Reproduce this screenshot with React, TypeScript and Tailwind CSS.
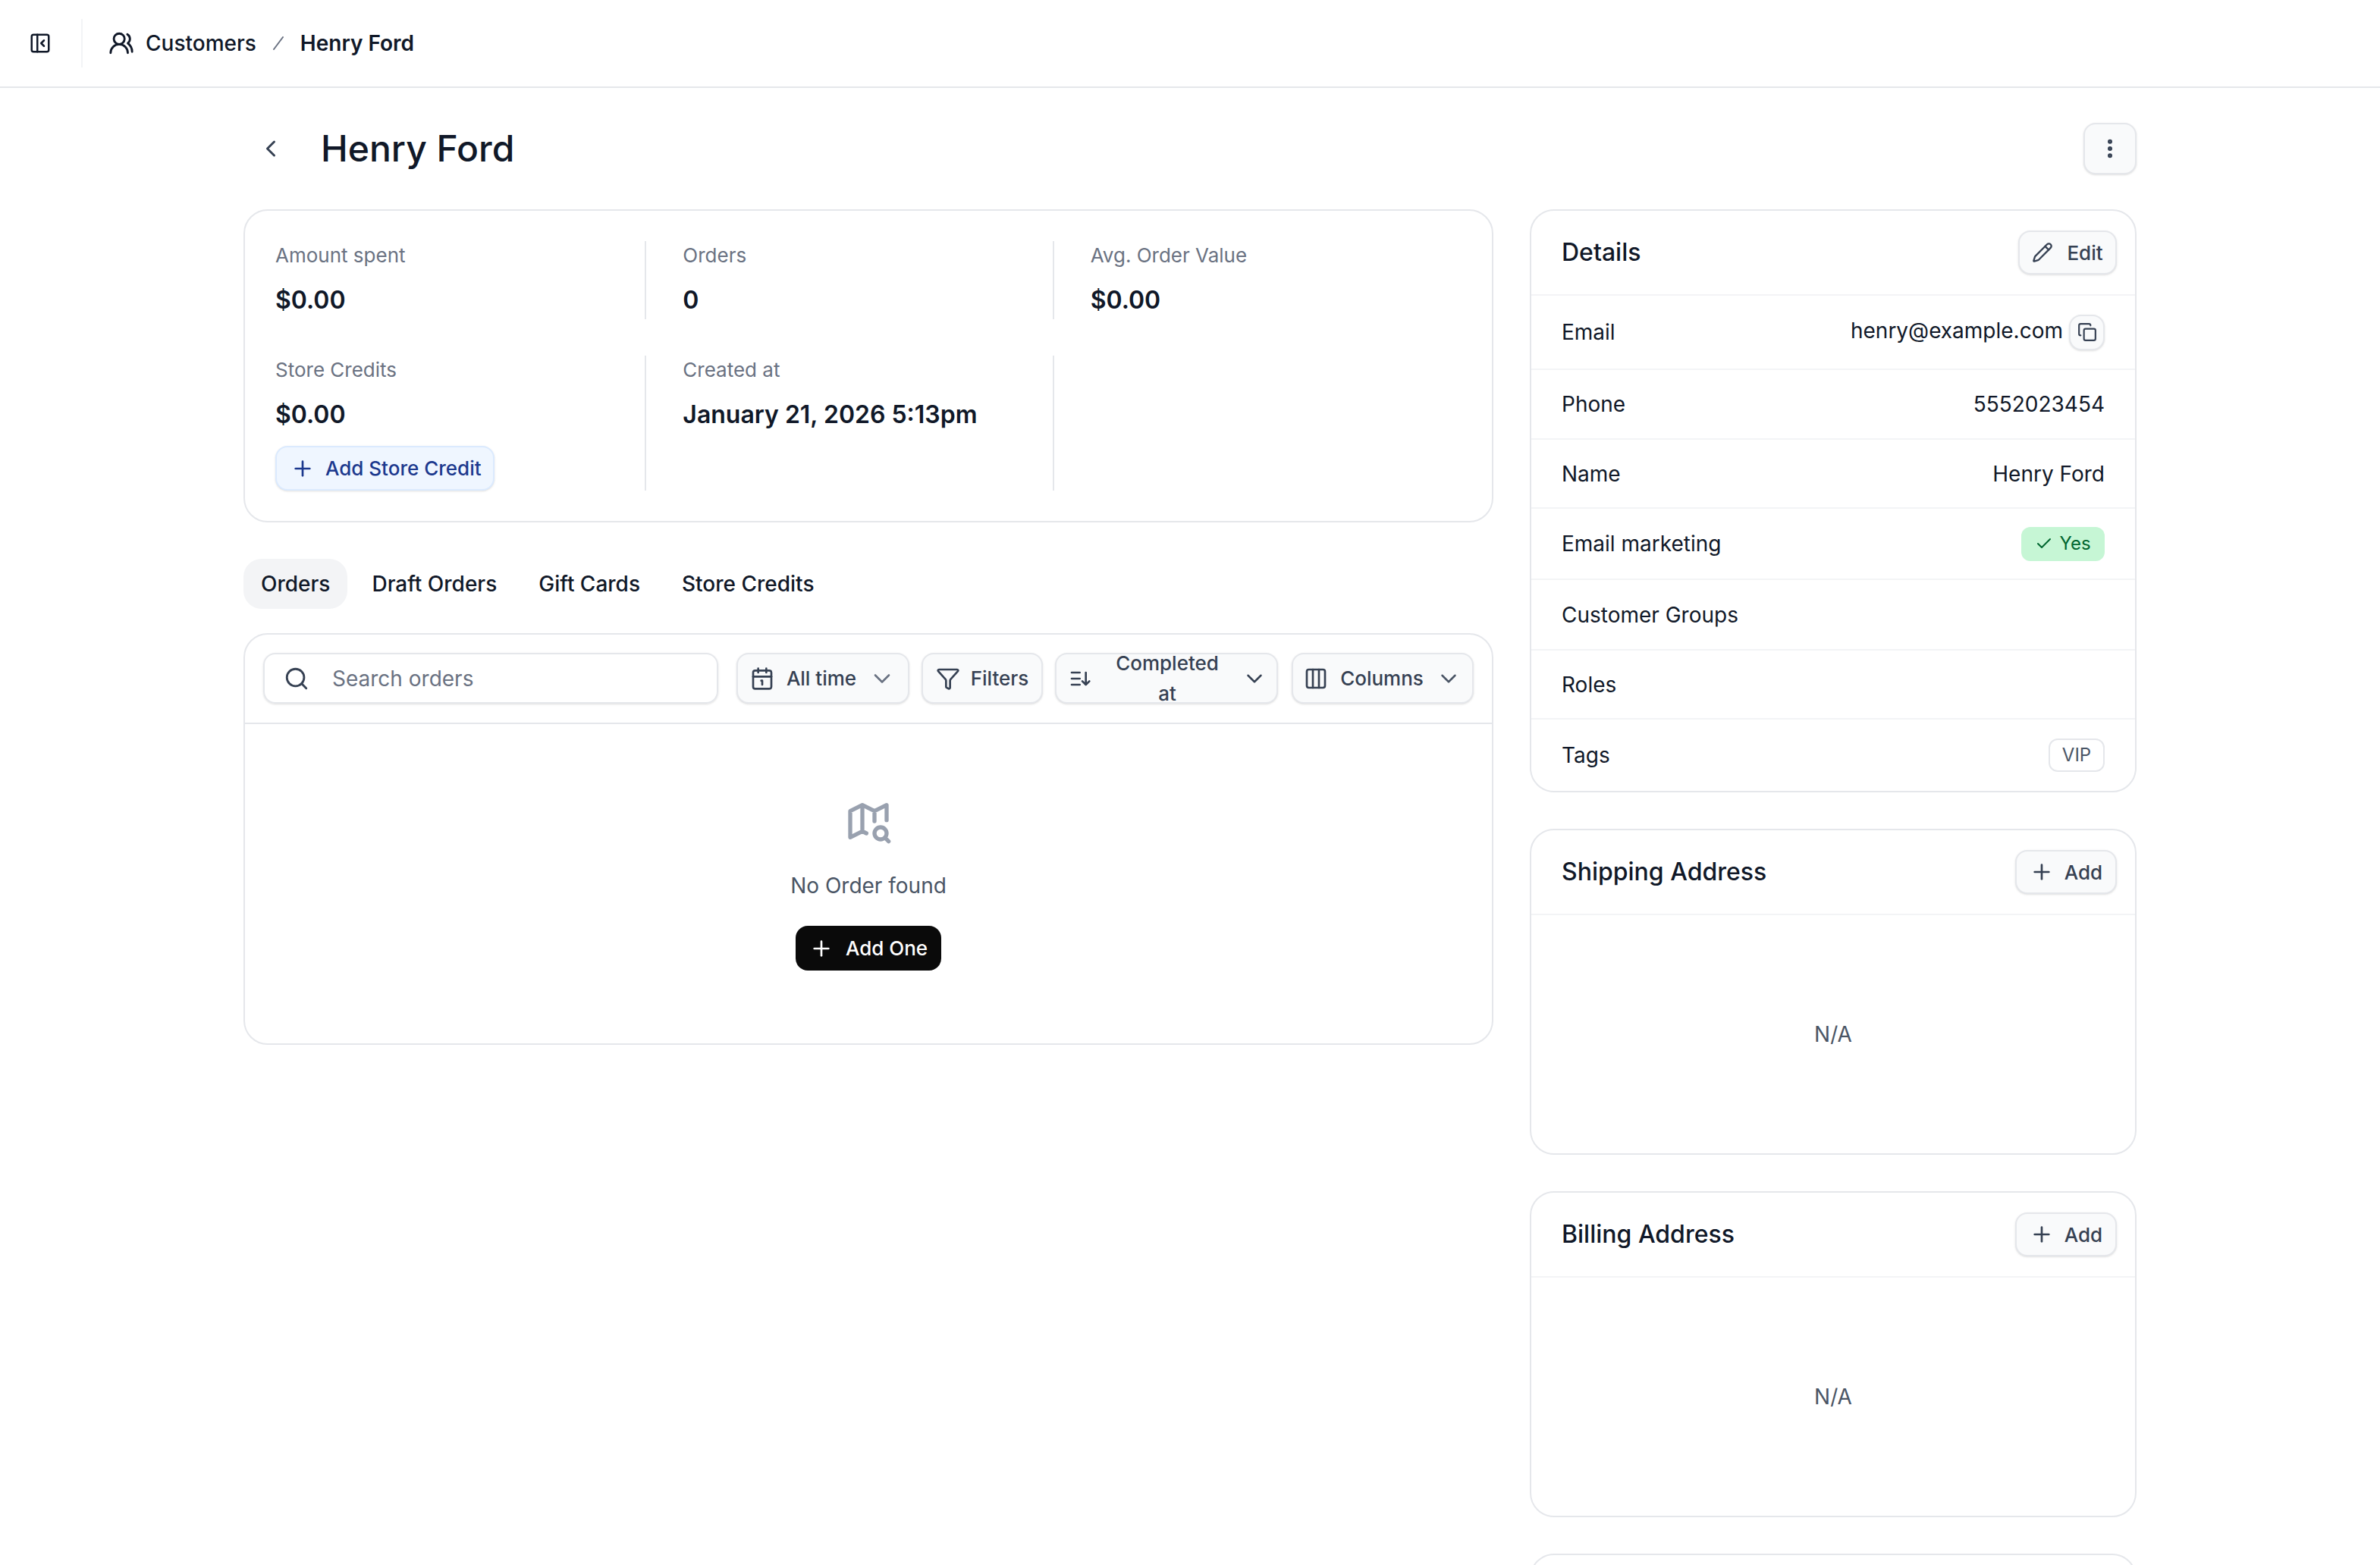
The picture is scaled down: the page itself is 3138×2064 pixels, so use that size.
import { ReactNode } from 'react';
import {
  Calendar1,
  Check,
  ChevronDown,
  ChevronLeft,
  Columns3,
  Copy,
  EllipsisVertical,
  Funnel,
  PanelLeftClose,
  Pencil,
  Plus,
  Search,
  UsersRound,
} from 'lucide-react';

// Small outlined button used in the toolbar and card headers
function ToolButton({ children, className = '' }: { children: ReactNode; className?: string }) {
  return (
    <button className={`flex items-center justify-center rounded-[16px] border-2 border-gray-200 bg-gray-50 text-[26px] font-medium text-gray-700 shadow-sm ${className}`}>
      {children}
    </button>
  );
}

function Stat({ label, value, divider = true, children }: { label: string; value?: string; divider?: boolean; children?: ReactNode }) {
  return (
    <div className={divider ? 'border-r-2 border-gray-200' : ''}>
      <div className="text-[26px] leading-[38px] text-gray-500">{label}</div>
      {value && <div className="mt-4 pb-px text-[32px] font-semibold leading-[48px] text-gray-900">{value}</div>}
      {children}
    </div>
  );
}

function DetailRow({ label, height, children }: { label: string; height: string; children?: ReactNode }) {
  return (
    <div className={`flex items-center justify-between border-b-2 border-gray-100 px-10 last:border-b-0 ${height}`}>
      <span className="text-[28px] text-gray-900">{label}</span>
      {children}
    </div>
  );
}

function AddressCard({ title }: { title: string }) {
  return (
    <div className="h-[430px] shrink-0 rounded-[32px] border-2 border-gray-200 bg-white">
      <div className="flex h-[112px] items-center justify-between border-b-2 border-gray-100 pl-10 pr-[24px]">
        <h2 className="text-[32px] font-medium text-gray-900">{title}</h2>
        <ToolButton className="h-[58px] w-[134px] gap-[14px]">
          <Plus size={32} strokeWidth={2} />
          Add
        </ToolButton>
      </div>
      <div className="flex h-[314px] items-center justify-center text-[28px] text-gray-600">N/A</div>
    </div>
  );
}

const tabs = ['Orders', 'Draft Orders', 'Gift Cards', 'Store Credits'];

export default function App() {
  return (
    <div className="h-[2064px] overflow-hidden bg-white font-[Inter,sans-serif]">
      <header className="flex h-[116px] items-center border-b-2 border-gray-200">
        <div className="ml-[38px] flex h-16 w-[71px] items-center border-r-2 border-gray-100">
          <PanelLeftClose size={30} strokeWidth={2} className="text-gray-900" />
        </div>
        <UsersRound size={34} strokeWidth={2} className="ml-[34px] text-gray-900" />
        <span className="ml-[15px] text-[28px] font-medium text-gray-900">Customers</span>
        <svg width="14" height="18" viewBox="0 0 14 18" fill="none" stroke="currentColor" strokeWidth="2" strokeLinecap="round" className="ml-[22px] text-gray-500">
          <path d="M1 17 13 1" />
        </svg>
        <span className="ml-[22px] text-[28px] font-semibold text-gray-900">Henry Ford</span>
      </header>

      <main className="px-[321px] pt-[46px]">
        <div className="mb-[46px] flex h-[68px] items-center">
          <button className="flex w-[72px] items-center justify-center text-gray-700">
            <ChevronLeft size={36} strokeWidth={2} />
          </button>
          <h1 className="ml-[30px] text-[48px] font-medium text-gray-900">Henry Ford</h1>
          <ToolButton className="ml-auto h-[68px] w-[70px]">
            <EllipsisVertical size={32} strokeWidth={2.5} />
          </ToolButton>
        </div>

        <div className="flex gap-12">
          <div className="w-[1648px] shrink-0">
            <div className="grid grid-cols-3 gap-12 rounded-[32px] border-2 border-gray-200 p-10">
              <Stat label="Amount spent" value="$0.00" />
              <Stat label="Orders" value="0" />
              <Stat label="Avg. Order Value" value="$0.00" divider={false} />
              <Stat label="Store Credits" value="$0.00">
                <button className="mt-4 flex h-[59px] w-[289px] items-center gap-[14px] rounded-[16px] border-2 border-blue-100 bg-blue-50 pl-[18px] text-[26px] font-medium text-blue-900 shadow-sm">
                  <Plus size={32} strokeWidth={2} />
                  Add Store Credit
                </button>
              </Stat>
              <Stat label="Created at" value="January 21, 2026 5:13pm" />
              <div />
            </div>

            <div className="mt-12 flex gap-[9px]">
              {tabs.map((tab, i) => (
                <button
                  key={tab}
                  className={`h-[66px] rounded-[24px] px-[23px] text-[28px] font-medium text-gray-900 ${i === 0 ? 'bg-gray-100' : ''}`}
                >
                  {tab}
                </button>
              ))}
            </div>

            <div className="mt-8 h-[543px] rounded-[32px] border-2 border-gray-200 bg-white">
              <div className="flex items-center gap-[16px] border-b-2 border-gray-200 px-6 pb-[25px] pt-6">
                <div className="mr-[8px] flex h-[67px] flex-1 items-center gap-[30px] rounded-[16px] border-2 border-gray-200 pl-[25px] shadow-sm">
                  <Search size={34} strokeWidth={2} className="text-gray-700" />
                  <span className="text-[28px] text-gray-500">Search orders</span>
                </div>
                <ToolButton className="h-[67px] w-[228px] gap-4">
                  <Calendar1 size={32} strokeWidth={2} />
                  All time
                  <ChevronDown size={36} strokeWidth={1.75} className="text-gray-500" />
                </ToolButton>
                <ToolButton className="h-[67px] w-[160px] gap-[14px]">
                  <Funnel size={32} strokeWidth={2} />
                  Filters
                </ToolButton>
                <ToolButton className="h-[67px] w-[294px] gap-4 pl-4 pr-[12px] leading-[40px]">
                  <svg width="32" height="32" viewBox="0 0 24 24" fill="none" stroke="currentColor" strokeWidth="2" strokeLinecap="round" strokeLinejoin="round" className="shrink-0">
                    <path d="M3 6h8M3 12h8M3 18h8M17 6v12M13.5 14.5 17 18l3.500-3.500" />
                  </svg>
                  <span className="w-[110px] flex-1 text-center">Completed at</span>
                  <ChevronDown size={34} strokeWidth={1.75} className="shrink-0" />
                </ToolButton>
                <ToolButton className="ml-[2px] h-[67px] w-[240px] gap-4">
                  <Columns3 size={32} strokeWidth={2} />
                  Columns
                  <ChevronDown size={34} strokeWidth={1.75} className="text-gray-600" />
                </ToolButton>
              </div>
              <div className="flex flex-col items-center pt-[96px]">
                <svg width="64" height="64" viewBox="0 0 24 24" fill="none" stroke="currentColor" strokeWidth="2" strokeLinecap="round" strokeLinejoin="round" className="text-gray-400">
                  <path d="M11 18l-2-1-6 3V7l6-3 6 3 6-3v7.500M9 4v13M15 7v5M15 18a3 3 0 1 0 6 0 3 3 0 1 0-6 0M20.200 20.200 22 22" />
                </svg>
                <p className="mt-[33px] text-[28px] leading-[40px] text-gray-600">No Order found</p>
                <button className="mt-[33px] flex h-[59px] w-[192px] items-center justify-center gap-[16px] rounded-[16px] bg-neutral-950 text-[26px] font-medium text-white">
                  <Plus size={32} strokeWidth={2} />
                  Add One
                </button>
              </div>
            </div>
          </div>

          <div className="flex w-[800px] shrink-0 flex-col gap-12">
            <div className="rounded-[32px] border-2 border-gray-200 bg-white">
              <div className="flex h-[112px] items-center justify-between border-b-2 border-gray-100 pl-10 pr-[24px]">
                <h2 className="text-[32px] font-medium text-gray-900">Details</h2>
                <ToolButton className="h-[58px] w-[130px] gap-[18px]">
                  <Pencil size={28} strokeWidth={2} />
                  Edit
                </ToolButton>
              </div>
              <DetailRow label="Email" height="h-[98px]">
                <div className="flex items-center gap-[8px]">
                  <span className="pb-[4px] text-[28px] text-gray-900">henry@example.com</span>
                  <ToolButton className="h-[47px] w-[47px]">
                    <Copy size={26} strokeWidth={2} />
                  </ToolButton>
                </div>
              </DetailRow>
              <DetailRow label="Phone" height="h-[92px]">
                <span className="text-[28px] text-gray-900">5552023454</span>
              </DetailRow>
              <DetailRow label="Name" height="h-[91px]">
                <span className="text-[28px] text-gray-900">Henry Ford</span>
              </DetailRow>
              <DetailRow label="Email marketing" height="h-[94px]">
                <span className="flex h-[45px] w-[110px] items-center justify-center gap-[8px] rounded-[12px] bg-[#c6f6d5] text-[24px] text-green-800">
                  <Check size={24} strokeWidth={2} />
                  Yes
                </span>
              </DetailRow>
              <DetailRow label="Customer Groups" height="h-[93px]" />
              <DetailRow label="Roles" height="h-[91px]" />
              <DetailRow label="Tags" height="h-[94px]">
                <span className="flex h-[44px] w-[74px] items-center justify-center rounded-[12px] border-2 border-gray-200 text-[24px] text-gray-600">
                  VIP
                </span>
              </DetailRow>
            </div>
            <AddressCard title="Shipping Address" />
            <AddressCard title="Billing Address" />
            <div className="h-[430px] shrink-0 rounded-[32px] border-2 border-gray-200 bg-white" />
          </div>
        </div>
      </main>
    </div>
  );
}
